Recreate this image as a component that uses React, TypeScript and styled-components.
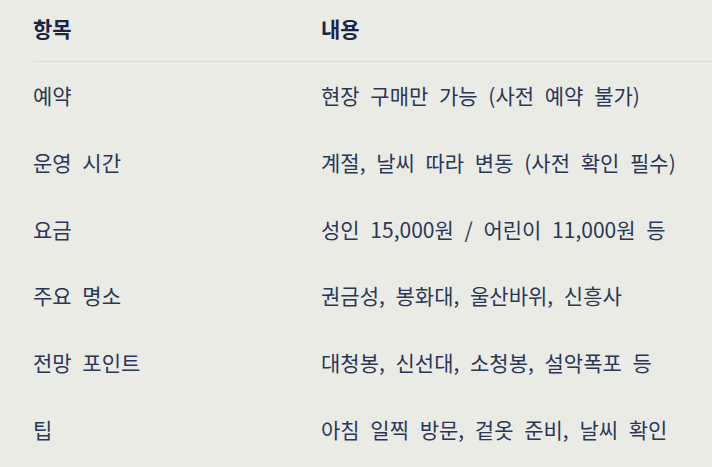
import React from "react";
import styled, { createGlobalStyle } from "styled-components";

const Global = createGlobalStyle`
  html, body {
    margin: 0;
    padding: 0;
    background: #ebebe6;
  }
  body {
    font-family: "Noto Sans CJK KR", "Noto Sans", sans-serif;
  }
`;

const Wrap = styled.div`
  padding: 0 0 0 33px;
`;

const Table = styled.table`
  width: 100%;
  border-collapse: collapse;
  font-size: 21px;
  word-spacing: 6px;
  color: #2a3858;
`;

const HeadCell = styled.th<{ $w?: number }>`
  text-align: left;
  font-weight: 700;
  color: #1b2545;
  height: 55px;
  padding: 0 0 6px;
  vertical-align: middle;
  border-bottom: 1px solid #d6dedb;
  width: ${(p) => (p.$w ? `${p.$w}px` : "auto")};
`;

const Cell = styled.td`
  padding: 0;
  height: 66.7px;
  vertical-align: middle;
  font-weight: 400;
`;

const rows: [string, string][] = [
  ["예약", "현장 구매만 가능 (사전 예약 불가)"],
  ["운영 시간", "계절, 날씨 따라 변동 (사전 확인 필수)"],
  ["요금", "성인 15,000원 / 어린이 11,000원 등"],
  ["주요 명소", "권금성, 봉화대, 울산바위, 신흥사"],
  ["전망 포인트", "대청봉, 신선대, 소청봉, 설악폭포 등"],
  ["팁", "아침 일찍 방문, 겉옷 준비, 날씨 확인"],
];

export default function App() {
  return (
    <>
      <Global />
      <Wrap>
        <Table>
          <thead>
            <tr>
              <HeadCell $w={288}>항목</HeadCell>
              <HeadCell>내용</HeadCell>
            </tr>
          </thead>
          <tbody>
            {rows.map(([k, v]) => (
              <tr key={k}>
                <Cell>{k}</Cell>
                <Cell>{v}</Cell>
              </tr>
            ))}
          </tbody>
        </Table>
      </Wrap>
    </>
  );
}
